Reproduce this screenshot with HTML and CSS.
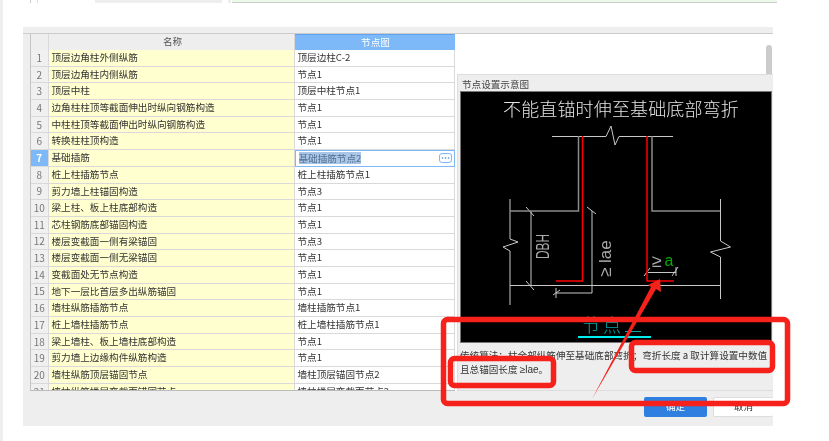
FILE: index.html
```html
<!DOCTYPE html>
<html lang="zh">
<head>
<meta charset="utf-8">
<title>节点设置</title>
<link rel="stylesheet" href="styles.css">
</head>
<body>
<div class="page">
  <div class="topstrip">
    <i class="ts-line"></i><i class="ts-white"></i><i class="ts-gray"></i><i class="ts-gap"></i><i class="ts-gray2"></i><i class="ts-green"></i>
  </div>
  <div class="dialog">
    <div class="main">
      <div class="grid">
        <div class="row head"><div class="c num"></div><div class="c name">名称</div><div class="c node">节点图</div></div>
        <div class="row"><div class="c num">1</div><div class="c name">顶层边角柱外侧纵筋</div><div class="c node">顶层边柱C-2</div></div>
        <div class="row"><div class="c num">2</div><div class="c name">顶层边角柱内侧纵筋</div><div class="c node">节点1</div></div>
        <div class="row"><div class="c num">3</div><div class="c name">顶层中柱</div><div class="c node">顶层中柱节点1</div></div>
        <div class="row"><div class="c num">4</div><div class="c name">边角柱柱顶等截面伸出时纵向钢筋构造</div><div class="c node">节点1</div></div>
        <div class="row"><div class="c num">5</div><div class="c name">中柱柱顶等截面伸出时纵向钢筋构造</div><div class="c node">节点1</div></div>
        <div class="row"><div class="c num">6</div><div class="c name">转换柱柱顶构造</div><div class="c node">节点1</div></div>
        <div class="row sel"><div class="c num">7</div><div class="c name">基础插筋</div><div class="c node"><span class="seltext">基础插筋节点2</span><svg class="more" viewBox="0 0 13 10" width="13" height="10" aria-hidden="true"><rect x=".5" y=".5" width="12" height="9" rx="2.500"/><circle cx="3.500" cy="5" r=".8"/><circle cx="6.500" cy="5" r=".8"/><circle cx="9.500" cy="5" r=".8"/></svg></div></div>
        <div class="row"><div class="c num">8</div><div class="c name">桩上柱插筋节点</div><div class="c node">桩上柱插筋节点1</div></div>
        <div class="row"><div class="c num">9</div><div class="c name">剪力墙上柱锚固构造</div><div class="c node">节点3</div></div>
        <div class="row"><div class="c num">10</div><div class="c name">梁上柱、板上柱底部构造</div><div class="c node">节点1</div></div>
        <div class="row"><div class="c num">11</div><div class="c name">芯柱钢筋底部锚固构造</div><div class="c node">节点1</div></div>
        <div class="row"><div class="c num">12</div><div class="c name">楼层变截面一侧有梁锚固</div><div class="c node">节点3</div></div>
        <div class="row"><div class="c num">13</div><div class="c name">楼层变截面一侧无梁锚固</div><div class="c node">节点1</div></div>
        <div class="row"><div class="c num">14</div><div class="c name">变截面处无节点构造</div><div class="c node">节点1</div></div>
        <div class="row"><div class="c num">15</div><div class="c name">地下一层比首层多出纵筋锚固</div><div class="c node">节点1</div></div>
        <div class="row"><div class="c num">16</div><div class="c name">墙柱纵筋插筋节点</div><div class="c node">墙柱插筋节点1</div></div>
        <div class="row"><div class="c num">17</div><div class="c name">桩上墙柱插筋节点</div><div class="c node">桩上墙柱插筋节点1</div></div>
        <div class="row"><div class="c num">18</div><div class="c name">梁上墙柱、板上墙柱底部构造</div><div class="c node">节点1</div></div>
        <div class="row"><div class="c num">19</div><div class="c name">剪力墙上边缘构件纵筋构造</div><div class="c node">节点1</div></div>
        <div class="row"><div class="c num">20</div><div class="c name">墙柱纵筋顶层锚固节点</div><div class="c node">墙柱顶层锚固节点2</div></div>
        <div class="row"><div class="c num">21</div><div class="c name">墙柱纵筋楼层变截面锚固节点</div><div class="c node">墙柱楼层变截面节点2</div></div>
      </div>
      <div class="side">
        <div class="side-top"><div class="thumb"></div></div>
        <div class="panel">
          <div class="panel-title">节点设置示意图</div>
          <svg class="drawing" viewBox="460 91 312 252" width="312" height="252" aria-label="节点示意图">
            <rect x="460" y="91" width="312" height="252" fill="#000"/>
            <rect x="460.500" y="91.500" width="311" height="251" fill="none" stroke="#777"/>
            <text class="d-title" x="503" y="116">不能直锚时伸至基础底部弯折</text>
            <g class="thin">
              <path d="M552 136.500H606L611 126L615 145L619 136.500H673"/>
              <path d="M510 199V239L518 242L503 247L510 251V305"/>
              <path d="M720.500 199V241L730.500 247L710.500 252L720.500 257V299"/>
              <path d="M510 285.500H720"/>
              <path d="M531 211V285"/>
              <path d="M526 207L534 216M526 281L534 290"/>
              <path d="M592 211V293H556"/>
              <path d="M587 207L596 214M556 288V298M553 295L560 290"/>
              <path d="M648 272.500H676M644 276L650 268M672 276L678 267M676 267V276"/>
            </g>
            <path class="wall" d="M578.500 136V211H510M652 136V211H720"/>
            <path class="rebar" d="M582.500 136V281H556M647 136V281H674"/>
            <text class="d-dbh" transform="translate(549 259) rotate(-90) scale(.66 1)">DBH</text>
            <text class="d-lae" transform="translate(611 277) rotate(-90)">≥ lae</text>
            <text class="d-ge" x="652" y="267">≥</text>
            <text class="d-a" x="664.500" y="266">a</text>
            <text class="d-node" x="582" y="332">节点二</text>
            <path class="d-under" d="M578 337H651"/>
          </svg>
          <p class="note">传统算法：柱全部纵筋伸至基础底部弯折；弯折长度 a 取计算设置中数值<br>且总锚固长度 <span class="latin">≥lae</span>。</p>
        </div>
      </div>
    </div>
    <div class="footer">
      <button class="btn ok" type="button">确定</button>
      <button class="btn cancel" type="button">取消</button>
    </div>
  </div>
  <svg class="marks" viewBox="0 0 829 441" width="829" height="441" aria-hidden="true">
    <rect x="443.500" y="319.500" width="344" height="84" rx="4"/>
    <rect x="450.500" y="358.500" width="103" height="27" rx="4"/>
    <rect x="631.500" y="342.500" width="141" height="28" rx="4"/>
    <polygon points="660,279 661,292 656,289 592,399 651,287 648,285"/>
  </svg>
</div>
</body>
</html>
```
FILE: styles.css
```css
* { box-sizing: border-box; }
html, body { margin: 0; padding: 0; background: #fff; }
body { font-family: "Noto Sans CJK SC", "Liberation Sans", sans-serif; font-size: 9.6px; color: #333; }

.page {
  position: relative;
  width: 829px;
  height: 441px;
  overflow: hidden;
  border-left: 3px solid #eee;
  filter: blur(.3px);
}

.topstrip { display: flex; height: 3px; }
.topstrip i { display: block; height: 3px; }
.ts-line { width: 1px; margin-left: 27px; background: #ccc; }
.ts-white { width: 58px; margin-left: 6px; background: #fff; border-left: 1px solid #ddd; }
.ts-gray { width: 127px; background: #eee; }
.ts-gap { width: 6px; }
.ts-gray2 { width: 3px; background: #eee; }
.ts-green { width: 545px; margin-left: 1px; background: linear-gradient(#ecfbe9 0 2px, #ccc 2px); }

.dialog {
  width: 750px;
  height: 399px;
  margin: 24px 0 0 20px;
  padding-top: 6px;
  background: #eee;
}

.main {
  display: flex;
  height: 358px;
  border-top: 1px solid #ccc;
}

.grid {
  width: 425px;
  height: 357px;
  margin-left: 7px;
  overflow: hidden;
  flex: none;
  border-left: 1px solid #c4c4c4;
  border-bottom: 1px solid #bbb;
}
.row {
  display: grid;
  grid-template-columns: 17.500px 246px 160px;
  height: 16.700px;
}
.c {
  display: flex;
  align-items: center;
  padding-left: 3px;
  white-space: nowrap;
  overflow: hidden;
  border-right: 1px solid #d9d9d9;
  border-bottom: 1px solid #d9d9d9;
  line-height: 1;
}
.num { justify-content: center; padding: 0; background: #f0f0f0; color: #777; font-size: 10px; }
.name { background: #ffffcf; }
.node { background: #fff; }

.head { height: 16px; }
.head .c { justify-content: center; border-bottom: 0; background: #eee; color: #555; }
.head .node { background: #7db8f8; color: #fff; border-top: 1px solid #5fa3ee; border-right-color: #7db8f8; }

.sel .num { background: #7db8f8; color: #fff; font-weight: 700; }
.sel .node { justify-content: space-between; border: 1.500px solid #7db8f8; padding: 0 2px 0 3px; }
.seltext { background: #a9c6e8; color: #54708f; line-height: 12px; }
.more { flex: none; }
.more rect { fill: #fff; stroke: #7db8f8; }
.more circle { fill: #3f86d8; }

.side { width: 318px; flex: none; display: flex; flex-direction: column; background: #fff; }
.side-top { height: 40px; display: flex; justify-content: flex-end; padding-right: 1px; }
.thumb { width: 6px; height: 30px; margin-top: 11px; background: #ccc; border-radius: 3px 3px 0 0; }

.panel {
  flex: 1;
  margin-left: 2px;
  background: #eee;
  border-top: 1px solid #ddd;
  border-left: 1px solid #ddd;
  border-bottom: 1px solid #ddd;
}
.panel-title { height: 16px; padding-left: 4px; line-height: 18px; color: #444; }
.drawing { display: block; margin-left: 2px; }
.note { margin: 5px 0 0 2px; line-height: 14px; white-space: nowrap; color: #333; }
.latin { font-family: "Liberation Sans", sans-serif; font-size: 10px; }

.thin { fill: none; stroke: #c8c8c8; stroke-width: 1; }
.wall { fill: none; stroke: #8a8a8a; stroke-width: 1.500; }
.rebar { fill: none; stroke: #f00; stroke-width: 1.500; }
.d-title { font-size: 18px; letter-spacing: .15px; fill: #e4e4e4; font-weight: 300; }
.d-dbh { font-family: "Liberation Sans", sans-serif; font-size: 18px; fill: #aaa; }
.d-lae { font-family: "Liberation Sans", sans-serif; font-size: 17px; fill: #aaa; }
.d-ge { font-family: "Liberation Sans", sans-serif; font-size: 18px; fill: #aaa; }
.d-a { font-family: "Liberation Sans", sans-serif; font-size: 16px; fill: #0a0; }
.d-node { font-size: 18px; letter-spacing: 3px; fill: #0aa; font-weight: 300; }
.d-under { fill: none; stroke: #0ee; stroke-width: 2; }

.footer { display: flex; justify-content: flex-end; gap: 6px; padding-top: 6px; height: 41px; }
.btn {
  height: 20px;
  padding: 0;
  border-radius: 2px;
  font: inherit;
  line-height: 1;
}
.ok { width: 63px; background: #2e7fe0; border: 0; color: #fff; }
.cancel { width: 60px; background: #fff; border: 1px solid #ddd; border-right: 0; color: #333; }

.marks { position: absolute; left: -3px; top: 0; pointer-events: none; }
.marks rect { fill: none; stroke: #f5211a; stroke-width: 5.500; }
.marks polygon { fill: #f5211a; }
```
